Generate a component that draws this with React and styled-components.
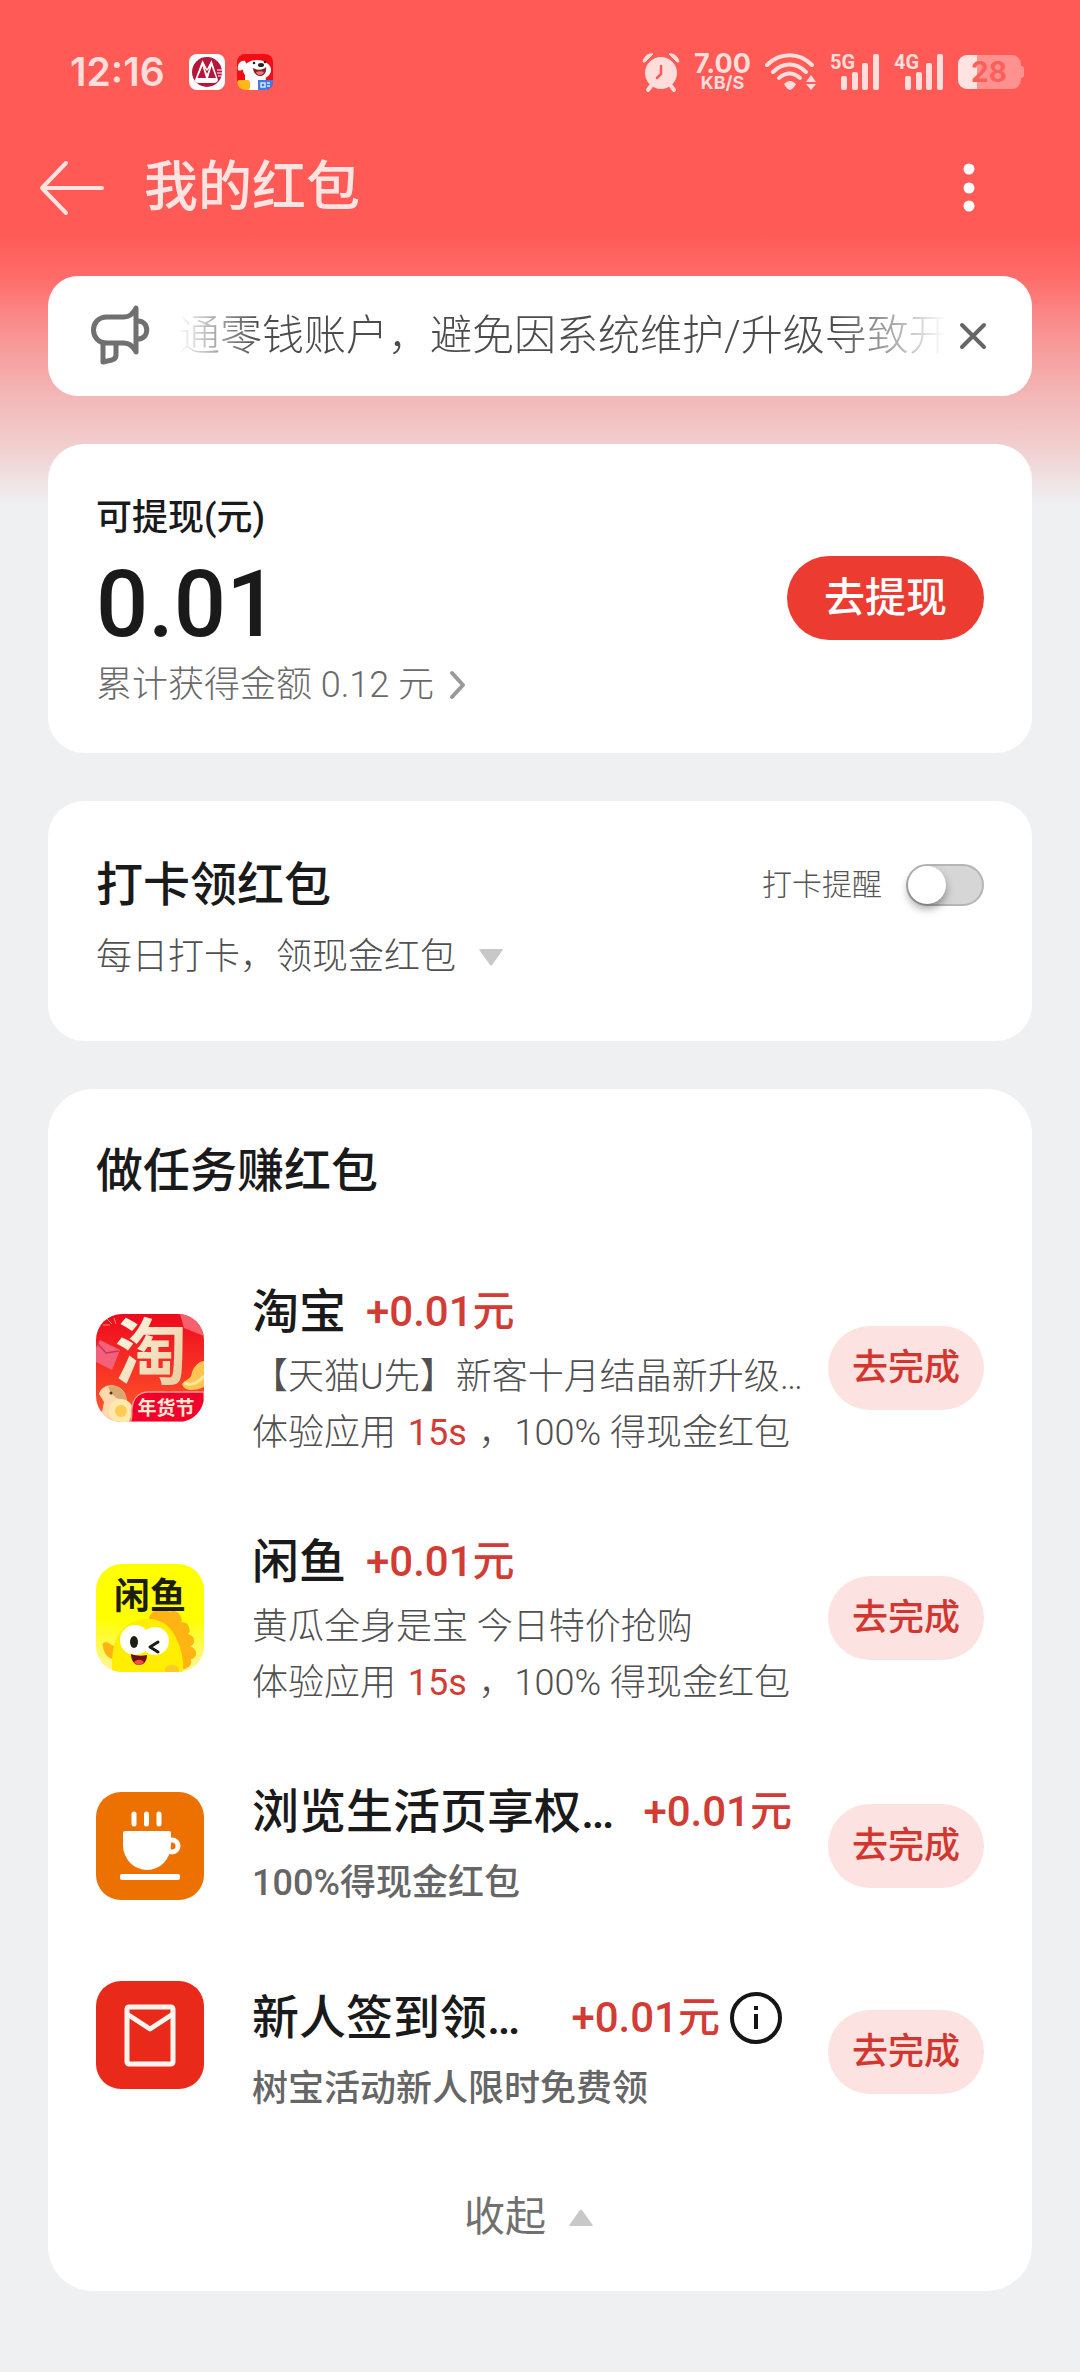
import React, { useId, useState } from "react";
import styled, { createGlobalStyle } from "styled-components";

const GlobalStyle = createGlobalStyle`
  * { box-sizing: border-box; }
  body {
    margin: 0;
    background: #eef0f2;
    color: #1a1a1a;
    font-family: Roboto, "Noto Sans CJK SC", sans-serif;
  }
  button {
    border: 0;
    margin: 0;
    padding: 0;
    background: none;
    color: inherit;
    font: inherit;
    cursor: pointer;
  }
  h1, h2, h3, p { margin: 0; }
  svg { display: block; flex: none; overflow: visible; }
`;

const Page = styled.div`
  min-height: 100vh;
  padding-bottom: 80px;
  background: linear-gradient(
    #ff5a56 0,
    #ff5a56 232px,
    #ff6b68 276px,
    #f98b8a 320px,
    #f3b7b7 396px,
    #f2cdcd 444px,
    #eef0f2 504px
  ) no-repeat #eef0f2;
`;

const StatusBar = styled.div`
  display: flex;
  align-items: center;
  justify-content: space-between;
  height: 144px;
  padding: 0 56px 0 70px;
  color: #ffdddb;
`;

const StatusGroup = styled.div`
  display: flex;
  align-items: center;
  gap: ${(p) => p.$gap}px;
`;

const Clock = styled.span`
  margin-right: 12px;
  font: 600 39px/48px Inter, sans-serif;
`;

const Speed = styled.div`
  display: flex;
  flex-direction: column;
  align-items: center;
  font-family: Inter, sans-serif;
  font-weight: 700;
`;

const SpeedValue = styled.span`
  font-size: 27px;
  line-height: 22px;
`;

const SpeedUnit = styled.span`
  font-size: 18px;
  line-height: 16px;
`;

const AppBar = styled.header`
  display: flex;
  align-items: center;
  height: 88px;
  padding: 0 86px 0 40px;
  color: #ffe3e1;
`;

const IconButton = styled.button`
  display: flex;
  align-items: center;
  justify-content: center;
  flex: none;
`;

const PageTitle = styled.h1`
  flex: 1;
  margin-left: 40px;
  font-size: 54px;
  font-weight: 500;
  line-height: 72px;
`;

const Main = styled.main`
  display: flex;
  flex-direction: column;
  gap: 48px;
  padding: 44px 48px 0;
`;

const Notice = styled.section`
  display: flex;
  align-items: center;
  height: 120px;
  padding: 0 46px 0 42px;
  border-radius: 30px;
  background: #fff;
  color: #6e6e6e;
`;

const NoticeText = styled.p`
  flex: 1;
  min-width: 0;
  margin: 0 6px 0 28px;
  overflow: hidden;
  white-space: nowrap;
  font-size: 42px;
  line-height: 62px;
  font-weight: 300;
  color: #4c4c4c;
  mask-image: linear-gradient(90deg, transparent, #000 80px, #000 calc(100% - 120px), transparent calc(100% - 8px));
`;

const Card = styled.section`
  padding: ${(p) => p.$pad};
  border-radius: ${(p) => p.$radius || 36}px;
  background: #fff;
`;

const Balance = styled(Card)`
  display: flex;
  align-items: center;
  justify-content: space-between;
`;

const BalanceLabel = styled.p`
  font-size: 36px;
  font-weight: 500;
  line-height: 52px;
`;

const BalanceValue = styled.p`
  font-size: 92px;
  font-weight: 500;
  line-height: 122px;
`;

const TotalLink = styled.a`
  display: flex;
  align-items: center;
  gap: 16px;
  color: #6a6a6a;
  font-size: 36px;
  font-weight: 300;
  line-height: 38px;
  text-decoration: none;
`;

const WithdrawButton = styled.button`
  width: 197px;
  height: 84px;
  border-radius: 42px;
  background: #ec3b30;
  color: #fff;
  font-size: 41px;
  font-weight: 500;
  line-height: 84px;
`;

const CardHead = styled.div`
  display: flex;
  align-items: center;
  justify-content: space-between;
`;

const CardTitle = styled.h2`
  font-size: 47px;
  font-weight: 500;
  line-height: 72px;
`;

const Remind = styled.div`
  display: flex;
  align-items: center;
  gap: 24px;
`;

const RemindLabel = styled.label`
  color: #555;
  font-size: 30px;
  font-weight: 300;
  line-height: 44px;
`;

const Switch = styled.input`
  appearance: none;
  display: flex;
  align-items: center;
  width: 78px;
  height: 42px;
  margin: 0;
  border: 2px solid #b5b5b5;
  border-radius: 21px;
  background: ${(p) => (p.checked ? "#ec3b30" : "#d6d6d6")};
  cursor: pointer;

  &::before {
    content: "";
    width: 38px;
    height: 38px;
    margin-left: ${(p) => (p.checked ? 36 : 0)}px;
    border-radius: 50%;
    background: #fff;
    box-shadow: 0 5px 8px rgba(0, 0, 0, 0.35);
  }
`;

const ToggleText = styled.button`
  display: flex;
  align-items: center;
  color: ${(p) => p.$color};
  font-size: ${(p) => p.$size}px;
  font-weight: ${(p) => p.$weight};
  line-height: 72px;
`;

const Caret = styled.span`
  display: flex;
  justify-content: center;
  width: 70px;
`;

const TaskList = styled.ul`
  display: flex;
  flex-direction: column;
  gap: 64px;
  margin: 68px 0 0;
  padding: 0;
  list-style: none;
`;

const Task = styled.li`
  display: flex;
  align-items: center;
`;

const TaskIcon = styled.div`
  flex: none;
  width: 108px;
  height: 108px;
  margin-right: 48px;
  align-self: ${(p) => (p.$top ? "flex-start" : "center")};
`;

const TaskBody = styled.div`
  flex: 1;
  min-width: 0;
`;

const TaskHead = styled.div`
  display: flex;
  align-items: center;
  height: 74px;
  padding-right: ${(p) => (p.$info ? 46 : 36)}px;
`;

const TaskTitle = styled.h3`
  flex: ${(p) => (p.$grow ? 1 : "none")};
  white-space: nowrap;
  font-size: 47px;
  font-weight: 500;
  line-height: 74px;
`;

const Amount = styled.span`
  margin-left: 20px;
  color: #d23c34;
  font-size: 42px;
  font-weight: 500;
  line-height: 74px;
`;

const InfoButton = styled(IconButton)`
  margin-left: 10px;
`;

const TaskLine = styled.p`
  white-space: nowrap;
  color: ${(p) => (p.$strong ? "#666" : "#505050")};
  font-size: 36px;
  font-weight: ${(p) => (p.$strong ? 500 : 300)};
  line-height: ${(p) => (p.$strong ? 68 : 56)}px;
`;

const Seconds = styled.span`
  margin: 0 3px;
  color: #d23c34;
  font-weight: 400;
`;

const DoButton = styled.button`
  flex: none;
  width: 156px;
  height: 84px;
  border-radius: 42px;
  background: #fce2e1;
  color: #d2372f;
  font-size: 36px;
  font-weight: 500;
  line-height: 84px;
`;

const Footer = styled.div`
  display: flex;
  justify-content: center;
  margin-top: 58px;
`;

const BankIcon = () => (
  <svg width="36" height="36" viewBox="0 0 36 36" aria-hidden="true">
    <rect width="36" height="36" rx="8" fill="#fff" />
    <circle cx="18" cy="18" r="15" fill="#b5173a" />
    <path d="M6 26 13.500 6 18 15 22.500 6 29 26q-1 3-4 3H10q-4 0-4-3Z" fill="#fff" />
    <path d="M8.500 24 13.500 12 17 24ZM19 24l3.500-12L27 24ZM15.500 14 18 20l2.500-6L18 17Z" fill="#b5173a" />
    <path d="M28 16h6M28 19h6M29 22h5" stroke="#fff" strokeWidth="1" />
  </svg>
);

const DogIcon = () => (
  <svg width="36" height="36" viewBox="0 0 36 36" aria-hidden="true">
    <clipPath id="dogClip"><rect width="36" height="36" rx="8" /></clipPath>
    <g clipPath="url(#dogClip)">
      <rect width="36" height="36" fill="#f20d12" />
      <ellipse cx="20" cy="16" rx="14" ry="10" fill="#fff" />
      <path d="M8 7C3 6 0 11 1 16c3 2 7-2 9-5Z" fill="#fff" />
      <path d="M8 18h20l2 18H8Z" fill="#fff" />
      <path d="M16 14c5 3 10 2 13-1 1 5-2 9-6 9s-7-4-7-8Z" fill="#84232a" />
      <path d="M19 18c3-1 6-1 8 0-1 3-6 5-8 0Z" fill="#f4776f" />
      <ellipse cx="24" cy="11" rx="3" ry="2" fill="#222" />
      <circle cx="17" cy="9" r="1.300" fill="#222" /><circle cx="28" cy="8" r="1.300" fill="#222" />
      <rect y="26" width="13" height="10" rx="3" fill="#ffb61a" />
      <rect x="21" y="26" width="15" height="10" fill="#3f7be8" />
      <path d="M24 29h4v4h-4zM30 29h3M30 32h3" stroke="#d9e8ff" strokeWidth="1.500" fill="none" />
    </g>
  </svg>
);

const AlarmIcon = () => (
  <svg width="38" height="38" viewBox="0 0 38 38" aria-hidden="true">
    <circle cx="19" cy="20" r="16" fill="#ffdddb" />
    <path d="m9 33-3 4M29 33l3 4" stroke="#ffdddb" strokeWidth="4" strokeLinecap="round" />
    <path d="M1 9C2 3 7 0 11 1L3 9ZM37 9C36 3 31 0 27 1l8 8Z" fill="#ffdddb" stroke="#ffdddb" strokeWidth="1" strokeLinejoin="round" />
    <path d="M19 13v8l-4 4" fill="none" stroke="#ff5a56" strokeWidth="2.500" strokeLinecap="round" />
  </svg>
);

const WifiIcon = () => (
  <svg width="51" height="38" viewBox="0 0 51 38" aria-hidden="true">
    <g fill="none" stroke="#ffdddb" strokeWidth="4" strokeLinecap="round">
      <path d="M2 12C15-1 34-1 47 12" />
      <path d="M8 19C18 9 31 9 41 19" />
      <path d="M14 25c7-6 14-6 21 0" />
    </g>
    <path d="M25 37c-2 0-5-4-6-6 4-4 8-4 12 0-1 2-4 6-6 6Z" fill="#ffdddb" />
    <path d="m46 22 5 7H41ZM46 37l5-6H41Z" fill="#ffdddb" />
  </svg>
);

const SignalIcon = ({ label }) => (
  <svg width="50" height="38" viewBox="0 0 50 38" role="img" aria-label={label}>
    <text x="0" y="16" fill="#ffdddb" fontFamily="Roboto, sans-serif" fontWeight="700" fontSize="20">{label}</text>
    <g fill="#ffdddb">
      <rect x="11" y="23" width="6" height="14" rx="2" />
      <rect x="22" y="19" width="6" height="18" rx="2" />
      <rect x="32" y="10" width="6" height="27" rx="2" />
      <rect x="43" y="1" width="6" height="36" rx="2" />
    </g>
  </svg>
);

const BatteryIcon = () => (
  <svg width="66" height="34" viewBox="0 0 66 34" role="img" aria-label="28">
    <clipPath id="batteryLevel"><rect width="19" height="34" /></clipPath>
    <rect width="63" height="34" rx="9" fill="#ff918e" />
    <path d="M63 11c4 0 3 4 3 6s1 6-3 6Z" fill="#ff918e" />
    <rect width="63" height="34" rx="9" fill="#ffe3e1" clipPath="url(#batteryLevel)" />
    <text x="31" y="27" textAnchor="middle" fill="#ff5f5b" fontFamily="Inter, sans-serif" fontWeight="700" fontSize="28">28</text>
  </svg>
);

const BackIcon = () => (
  <svg width="64" height="54" viewBox="0 0 64 54" fill="none" stroke="currentColor" strokeWidth="4" strokeLinecap="round" strokeLinejoin="round" aria-hidden="true">
    <path d="M26 2 2 27l24 25M2 27h60" />
  </svg>
);

const MoreIcon = () => (
  <svg width="50" height="50" viewBox="0 0 50 50" fill="#fff" aria-hidden="true">
    <circle cx="25" cy="6" r="5.500" /><circle cx="25" cy="25" r="5.500" /><circle cx="25" cy="43" r="5.500" />
  </svg>
);

const HornIcon = () => (
  <svg width="60" height="60" viewBox="0 0 60 60" fill="none" stroke="#707070" strokeWidth="5" strokeLinejoin="round" aria-hidden="true">
    <path d="M17 11h17c5 0 9-3 12-9v44c-3-6-7-9-12-9H17C-1 37-1 11 17 11Z" />
    <path d="M47 15c13-1 13 19 0 18M13 38v18l9-2c3-1 4-3 4-5V38" />
  </svg>
);

const CloseIcon = () => (
  <svg width="26" height="26" viewBox="0 0 26 26" stroke="#666" strokeWidth="4" strokeLinecap="round" aria-hidden="true">
    <path d="m2 2 22 22M24 2 2 24" />
  </svg>
);

const ChevronIcon = () => (
  <svg width="16" height="28" viewBox="0 0 16 28" fill="none" stroke="#999" strokeWidth="4" strokeLinecap="round" strokeLinejoin="round" aria-hidden="true">
    <path d="m2 2 11 12L2 26" />
  </svg>
);

const CaretIcon = ({ up }) => (
  <svg width="24" height="17" viewBox="0 0 24 17" fill="#c8c8c8" aria-hidden="true">
    <path d={up ? "M1 17c-1 0-1-1 0-2L11 1q1-1 2 0l10 14c1 1 1 2 0 2Z" : "M1 0c-1 0-1 1 0 2l10 14q1 1 2 0L23 2c1-1 1-2 0-2Z"} />
  </svg>
);

const InfoIcon = () => (
  <svg width="52" height="52" viewBox="0 0 52 52" aria-hidden="true">
    <circle cx="26" cy="26" r="24" fill="none" stroke="#151515" strokeWidth="4" />
    <path d="M24 14h4v4h-4zM24 22h4v15h-4z" fill="#151515" />
  </svg>
);

const TaobaoIcon = () => (
  <svg width="108" height="108" viewBox="0 0 108 108" role="img" aria-label="淘宝">
    <defs>
      <linearGradient id="tbRed" x1="0" y1="0" x2="0" y2="1">
        <stop offset="0" stopColor="#ee0a1e" /><stop offset="1" stopColor="#ff5a2a" />
      </linearGradient>
      <linearGradient id="tbGold" x1="0" y1="0" x2="1" y2="1">
        <stop offset="0" stopColor="#fffef0" /><stop offset="1" stopColor="#e8c795" />
      </linearGradient>
      <clipPath id="tbClip"><rect width="108" height="108" rx="26" /></clipPath>
    </defs>
    <g clipPath="url(#tbClip)">
      <rect width="108" height="108" fill="url(#tbRed)" />
      <path d="m0 34 4-8 20 10-8 20L0 48Z" fill="#f4607a" />
      <path d="m2 30 8 9 13-2" fill="none" stroke="#c83458" strokeWidth="1.500" />
      <path d="m84 0 4 14 20 8V0Z" fill="#f8606b" />
      <path d="M7 11h7M11 5l5 5M18 4l2 6" stroke="#ff8f62" strokeWidth="1" />
      <path d="M86 70c5-6 9-4 10-12 3-8 9-11 12-11v26c-8 4-20 5-22-3Z" fill="#ffc451" />
      <path d="M88 69c7 3 14 0 20-7" stroke="#ffe79c" strokeWidth="3" fill="none" />
      <path d="M3 80c2-8 12-11 19-7 6 2 8 8 9 14l3 21H4l4-20Z" fill="#ffd9ae" />
      <path d="M12 73c8-4 16 1 19 13-7 1-14-2-19-13Z" fill="#d9a772" />
      <circle cx="15" cy="79" r="1.500" fill="#4c332c" />
      <circle cx="25" cy="97" r="12" fill="#ffe9ac" /><circle cx="25" cy="97" r="6" fill="#ffcb52" />
      <path d="M34 108c3-3 1-8 2-14 1-10 7-16 17-16h55v30Z" fill="#f1002d" stroke="#ff9a8c" strokeWidth="1.500" />
      <text x="55" y="64" textAnchor="middle" fontFamily="'Noto Sans CJK SC', sans-serif" fontWeight="700" fontSize="72" fill="url(#tbGold)">淘</text>
      <text x="70" y="101" textAnchor="middle" fontFamily="'Noto Sans CJK SC', sans-serif" fontWeight="700" fontSize="19" fill="#ffe8cf">年货节</text>
    </g>
  </svg>
);

const XianyuIcon = () => (
  <svg width="108" height="108" viewBox="0 0 108 108" role="img" aria-label="闲鱼">
    <defs>
      <clipPath id="xyClip"><rect width="108" height="108" rx="26" /></clipPath>
      <linearGradient id="xyBg" x1="0" y1="0" x2="0" y2="1">
        <stop offset="0.500" stopColor="#ffff00" /><stop offset="1" stopColor="#fff59a" />
      </linearGradient>
    </defs>
    <g clipPath="url(#xyClip)">
      <rect width="108" height="108" fill="url(#xyBg)" />
      <path d="M53 54q3-9 10-7 5-6 10 1 7-3 11 3 3 6 1 7 8 0 8 6 2 3-1 6 7 2 6 8-1 4-4 4 7 3 6 9-2 4-5 4 2 7-6 10L70 108Z" fill="#ffb414" />
      <text x="54" y="45" textAnchor="middle" fontFamily="'Noto Sans CJK SC', sans-serif" fontWeight="700" fontSize="36" fill="#1d1d10">闲鱼</text>
      <path d="M7 83c-2-5 4-6 7-3l6 3-2 12C11 95 8 88 7 83Z" fill="#ffb414" />
      <path d="M16 108c0-13 0-27 7-38 14-21 46-20 56 2 7 13 9 25 8 36Z" fill="#ffee00" />
      <circle cx="39" cy="76" r="15" fill="#fff" /><circle cx="59" cy="77" r="14" fill="#fff" />
      <ellipse cx="38" cy="78" rx="4" ry="6" fill="#1d1d10" />
      <path d="m62 78-8 5 8 5" fill="none" stroke="#1d1d10" strokeWidth="3" strokeLinecap="round" strokeLinejoin="round" />
      <path d="M35 90c5 2 11 2 16 1 0 6-3 10-8 10s-8-5-8-11Z" fill="#6e1012" />
      <path d="M38 98c3-3 7-3 10 0-3 4-7 4-10 0Z" fill="#f2503d" />
      <ellipse cx="76" cy="106" rx="7" ry="5" fill="#ffc928" />
    </g>
  </svg>
);

const CoffeeIcon = () => (
  <svg width="108" height="108" viewBox="0 0 108 108" aria-hidden="true">
    <rect width="108" height="108" rx="25" fill="#ec7100" />
    <path d="M38 22v10M50.500 22v10M63 22v10" stroke="#fff" strokeWidth="5" strokeLinecap="round" />
    <path d="M29 39h44q2 0 2 2v12a24 25 0 0 1-48 0V41q0-2 2-2Z" fill="#fff" />
    <circle cx="76" cy="54" r="6" fill="none" stroke="#fff" strokeWidth="5" />
    <rect x="24" y="82" width="60" height="6" rx="2" fill="#fff" />
  </svg>
);

const EnvelopeIcon = () => (
  <svg width="108" height="108" viewBox="0 0 108 108" aria-hidden="true">
    <rect width="108" height="108" rx="25" fill="#e92a1b" />
    <g fill="none" stroke="#fff5ef" strokeWidth="5" strokeLinejoin="round">
      <rect x="31" y="26" width="46" height="57" rx="2" />
      <path d="m31 33 23 15 23-15" />
    </g>
  </svg>
);

const TASKS = [
  { icon: TaobaoIcon, title: "淘宝", desc: "【天猫U先】新客十月结晶新升级…", seconds: 15 },
  { icon: XianyuIcon, title: "闲鱼", desc: "黄瓜全身是宝 今日特价抢购", seconds: 15 },
  { icon: CoffeeIcon, title: "浏览生活页享权…", desc: "100%得现金红包", wide: true },
  { icon: EnvelopeIcon, title: "新人签到领…", desc: "树宝活动新人限时免费领", wide: true, info: true },
];

function TaskRow({ task }) {
  const Icon = task.icon;
  return (
    <Task>
      <TaskIcon $top={task.info}><Icon /></TaskIcon>
      <TaskBody>
        <TaskHead $info={task.info}>
          <TaskTitle $grow={task.wide}>{task.title}</TaskTitle>
          <Amount>+0.01元</Amount>
          {task.info && <InfoButton type="button" aria-label="说明"><InfoIcon /></InfoButton>}
        </TaskHead>
        <TaskLine $strong={task.wide}>{task.desc}</TaskLine>
        {task.seconds && (
          <TaskLine>体验应用 <Seconds>{task.seconds}s</Seconds> ，100% 得现金红包</TaskLine>
        )}
      </TaskBody>
      <DoButton type="button">去完成</DoButton>
    </Task>
  );
}

export default function App() {
  const [remind, setRemind] = useState(false);
  const remindId = useId();

  return (
    <Page>
      <GlobalStyle />
      <StatusBar>
        <StatusGroup $gap={12}>
          <Clock>12:16</Clock>
          <BankIcon />
          <DogIcon />
        </StatusGroup>
        <StatusGroup $gap={14}>
          <AlarmIcon />
          <Speed>
            <SpeedValue>7.00</SpeedValue>
            <SpeedUnit>KB/S</SpeedUnit>
          </Speed>
          <WifiIcon />
          <SignalIcon label="5G" />
          <SignalIcon label="4G" />
          <BatteryIcon />
        </StatusGroup>
      </StatusBar>
      <AppBar>
        <IconButton type="button" aria-label="返回"><BackIcon /></IconButton>
        <PageTitle>我的红包</PageTitle>
        <IconButton type="button" aria-label="更多"><MoreIcon /></IconButton>
      </AppBar>
      <Main>
        <Notice>
          <HornIcon />
          <NoticeText>通零钱账户，避免因系统维护/升级导致开</NoticeText>
          <IconButton type="button" aria-label="关闭"><CloseIcon /></IconButton>
        </Notice>

        <Balance $pad="48px 48px 49px">
          <div>
            <BalanceLabel>可提现(元)</BalanceLabel>
            <BalanceValue>0.01</BalanceValue>
            <TotalLink href="#total">累计获得金额 0.12 元<ChevronIcon /></TotalLink>
          </div>
          <WithdrawButton type="button">去提现</WithdrawButton>
        </Balance>

        <Card $pad="48px 48px 48px">
          <CardHead>
            <CardTitle>打卡领红包</CardTitle>
            <Remind>
              <RemindLabel htmlFor={remindId}>打卡提醒</RemindLabel>
              <Switch
                id={remindId}
                type="checkbox"
                role="switch"
                checked={remind}
                onChange={(e) => setRemind(e.target.checked)}
              />
            </Remind>
          </CardHead>
          <ToggleText type="button" $size={36} $weight={300} $color="#505050">
            每日打卡，领现金红包
            <Caret><CaretIcon /></Caret>
          </ToggleText>
        </Card>

        <Card $pad="46px 48px 38px" $radius={45}>
          <CardTitle>做任务赚红包</CardTitle>
          <TaskList>
            {TASKS.map((task) => <TaskRow key={task.title} task={task} />)}
          </TaskList>
          <Footer>
            <ToggleText type="button" $size={41} $weight={400} $color="#707070">
              收起
              <Caret><CaretIcon up /></Caret>
            </ToggleText>
          </Footer>
        </Card>
      </Main>
    </Page>
  );
}
